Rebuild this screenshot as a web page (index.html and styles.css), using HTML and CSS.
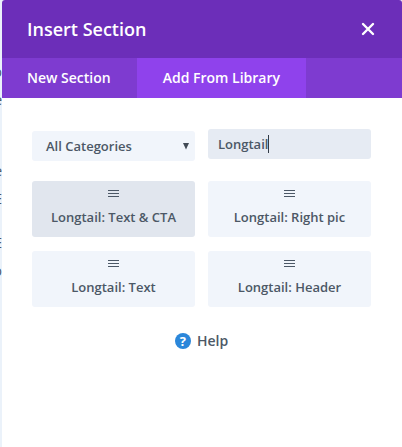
FILE: index.html
```html
<!DOCTYPE html>
<html lang="en">
<head>
    <meta charset="UTF-8">
    <meta name="viewport" content="width=device-width, initial-scale=1.0">
    <title>Insert Section</title>
    <link rel="stylesheet" href="styles.css">
</head>
<body>
    <!-- Page content behind the modal -->
    <div class="page-behind">
        <p>o<br>e</p>
        <p>e<br>E</p>
        <p>E<br>o</p>
    </div>

    <div class="modal">
        <div class="modal-header">
            <h1>Insert Section</h1>
            <button class="close" aria-label="Close">
                <svg width="14" height="14" viewBox="0 0 14 14">
                    <path d="M2 2L12 12M12 2L2 12" fill="none" stroke="#fff" stroke-width="2.4" stroke-linecap="round"/>
                </svg>
            </button>
        </div>

        <div class="tabs">
            <a class="tab">New Section</a>
            <a class="tab active">Add From Library</a>
        </div>

        <div class="modal-body">
            <div class="filters">
                <div class="select">
                    <span>All Categories</span>
                    <svg width="6" height="7" viewBox="0 0 6 7"><path d="M0 0H6L3 6.5Z" fill="#414a55"/></svg>
                </div>
                <div class="search">Longtail<span class="caret"></span></div>
            </div>

            <div class="library">
                <div class="card selected">
                    <svg class="bars" width="11" height="9" viewBox="0 0 11 9"><path d="M0 1.5H11M0 4.5H11M0 7.5H11" stroke="#4c5866" stroke-width="1"/></svg>
                    <span>Longtail: Text &amp; CTA</span>
                </div>
                <div class="card">
                    <svg class="bars" width="11" height="9" viewBox="0 0 11 9"><path d="M0 1.5H11M0 4.5H11M0 7.5H11" stroke="#4c5866" stroke-width="1"/></svg>
                    <span>Longtail: Right pic</span>
                </div>
                <div class="card">
                    <svg class="bars" width="11" height="9" viewBox="0 0 11 9"><path d="M0 1.5H11M0 4.5H11M0 7.5H11" stroke="#4c5866" stroke-width="1"/></svg>
                    <span>Longtail: Text</span>
                </div>
                <div class="card">
                    <svg class="bars" width="11" height="9" viewBox="0 0 11 9"><path d="M0 1.5H11M0 4.5H11M0 7.5H11" stroke="#4c5866" stroke-width="1"/></svg>
                    <span>Longtail: Header</span>
                </div>
            </div>

            <div class="help">
                <span class="help-icon">?</span>
                <span>Help</span>
            </div>
        </div>
    </div>
</body>
</html>
```
FILE: styles.css
```css
* {
    margin: 0;
    padding: 0;
    box-sizing: border-box;
}

body {
    display: flex;
    height: 100vh;
    overflow: hidden;
    background-color: #ebf2fa;
    font-family: "Open Sans", sans-serif;
    font-weight: 600;
    color: #4c5866;
}

.page-behind {
    display: flex;
    flex-direction: column;
    align-items: flex-end;
    gap: 16px;
    width: 2px;
    padding-top: 58px;
    overflow: hidden;
    font-size: 14px;
    font-weight: 400;
    line-height: 28px;
    text-align: right;
}

.page-behind p:first-child {
    margin-bottom: 27px;
}

.modal {
    flex: 1;
    background-color: #fff;
    border-radius: 3px 3px 0 0;
    overflow: hidden;
}

.modal-header {
    display: flex;
    justify-content: space-between;
    align-items: center;
    height: 58px;
    padding: 0 27px 0 25px;
    background-color: #6c2eb9;
    color: #fff;
}

h1 {
    font-size: 18px;
    font-weight: 600;
}

.close {
    display: flex;
    border: none;
    background: none;
    cursor: pointer;
}

.tabs {
    display: flex;
    height: 40px;
    background-color: #7e3bd0;
}

.tab {
    padding: 0 26px 0 25px;
    font-size: 14px;
    line-height: 39px;
    color: #fff;
}

.tab.active {
    padding: 0 26px;
    background-color: #8f42ec;
}

.modal-body {
    padding: 31px 31px 0 30px;
    font-size: 13px;
}

.filters,
.library {
    display: grid;
    grid-template-columns: 163px 163px;
    column-gap: 13px;
}

.select,
.search {
    display: flex;
    align-items: center;
    height: 30px;
    border-radius: 3px;
}

.select {
    justify-content: space-between;
    margin-top: 2px;
    padding: 0 6px 0 14px;
    background-color: #f1f5fb;
}

.search {
    padding-left: 10px;
    background-color: #e6ebf3;
}

.caret {
    width: 1px;
    height: 18px;
    background-color: #333b46;
}

.library {
    row-gap: 14px;
    margin-top: 20px;
}

.card {
    display: flex;
    flex-direction: column;
    align-items: center;
    height: 56px;
    padding-top: 8px;
    border-radius: 3px;
    background-color: #f1f5fb;
    line-height: 18px;
}

.card.selected {
    background-color: #e1e6ee;
}

.bars {
    margin-bottom: 10px;
}

.help {
    display: flex;
    justify-content: center;
    align-items: center;
    gap: 6px;
    margin-top: 24px;
    font-size: 14px;
    line-height: 20px;
}

.help-icon {
    width: 16px;
    height: 16px;
    border-radius: 50%;
    background-color: #2b87da;
    color: #fff;
    font-size: 13px;
    font-weight: 700;
    line-height: 16px;
    text-align: center;
}
```
